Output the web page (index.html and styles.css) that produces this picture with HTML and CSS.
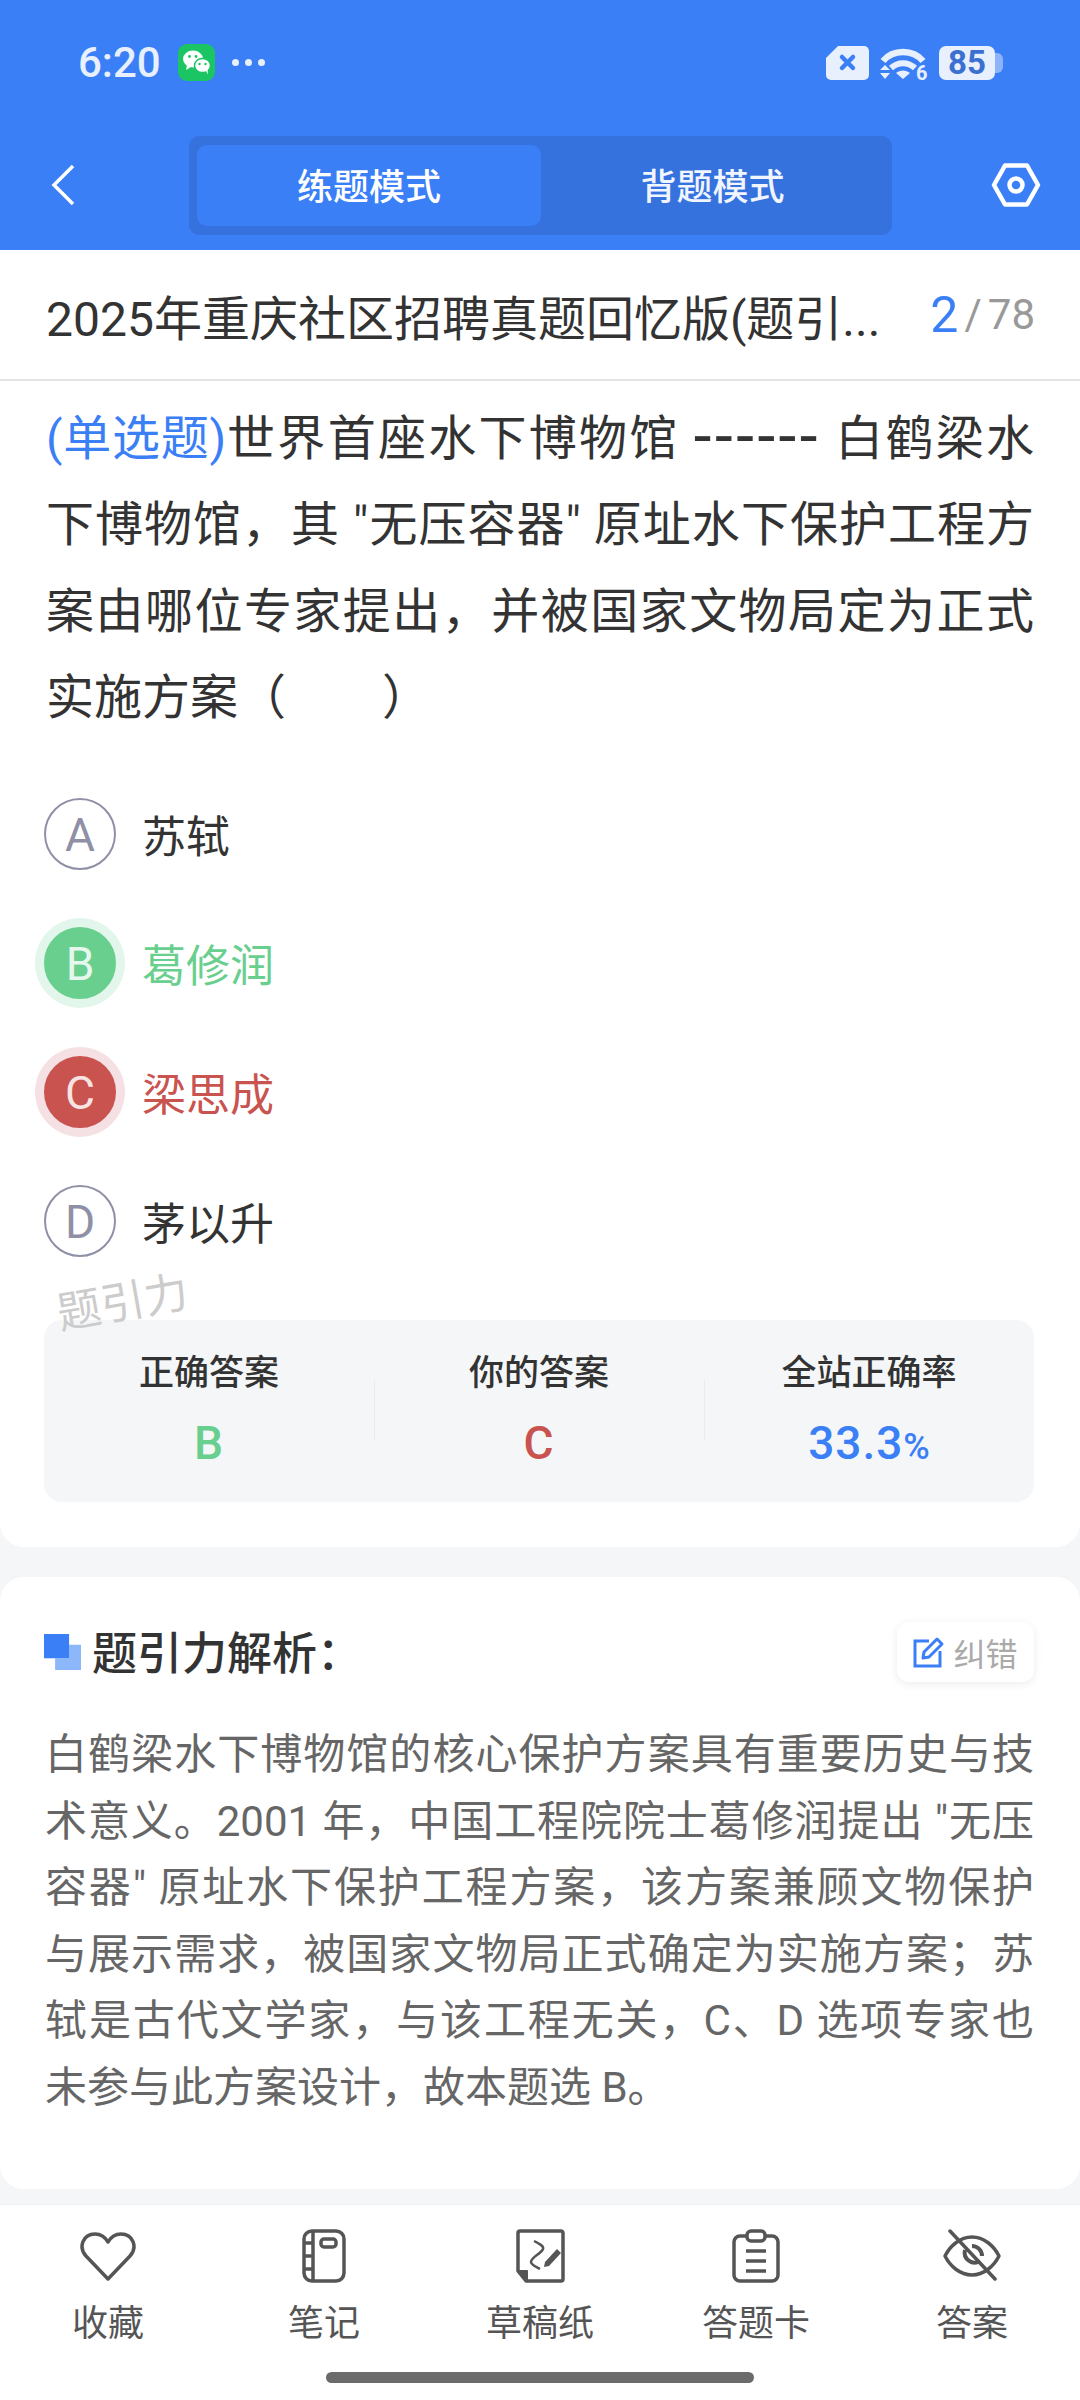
FILE: index.html
```html
<!doctype html>
<html lang="zh-CN">
<head>
	<meta charset="utf-8">
	<title>练题模式</title>
	<link rel="stylesheet" href="styles.css">
</head>
<body>
	<div id="app">
		<div class="header">
			<div class="status">
				<span class="time">6:20</span>
				<svg class="wechat" viewBox="0 0 37 37">
					<rect width="37" height="37" rx="9" fill="#1bc564"/>
					<ellipse cx="15" cy="15" rx="10" ry="8.500" fill="#fff"/>
					<path d="M9 21l-1 5 5-3z" fill="#fff"/>
					<ellipse cx="24.500" cy="21.500" rx="8" ry="7" fill="#fff" stroke="#1bc564" stroke-width="1.500"/>
					<path d="M28 27l2 3.500-.5-5z" fill="#fff"/>
					<circle cx="11.500" cy="12.500" r="1.400" fill="#1bc564"/>
					<circle cx="18" cy="12.500" r="1.400" fill="#1bc564"/>
					<circle cx="21.500" cy="20" r="1.200" fill="#1bc564"/>
					<circle cx="27.500" cy="20" r="1.200" fill="#1bc564"/>
				</svg>
				<span class="dots"><i></i><i></i><i></i></span>
				<span class="status-right">
					<svg class="sim" viewBox="0 0 43 34">
						<path d="M12 0h26a5 5 0 0 1 5 5v24a5 5 0 0 1-5 5H5a5 5 0 0 1-5-5V12z" fill="#e8effd"/>
						<path d="M16 11l11 11M27 11L16 22" stroke="#3b7ff7" stroke-width="4.500" stroke-linecap="round"/>
					</svg>
					<svg class="wifi" viewBox="0 0 46 34">
						<path d="M3 15C13 3 33 3 43 15" fill="none" stroke="#e8effd" stroke-width="6.500"/>
						<path d="M11 22c7-6.500 17-6.500 24 0" fill="none" stroke="#e8effd" stroke-width="6"/>
						<path d="M16 27c4-3.500 10-3.500 14 0l-7 6z" fill="#e8effd"/>
						<path d="M0 24l5-5 5 5zM0 27h10l-5 6z" fill="#e8effd"/>
						<text class="wifi-num" x="36" y="34">6</text>
					</svg>
					<span class="battery"><span class="battery-num">85</span></span>
				</span>
			</div>
			<div class="nav">
				<svg class="back" viewBox="0 0 24 42"><path d="M22 2L3 21l19 19" fill="none" stroke="#fff" stroke-width="3.500"/></svg>
				<div class="tabs">
					<span class="tab on">练题模式</span>
					<span class="tab">背题模式</span>
				</div>
				<svg class="setting" viewBox="0 0 50 44">
					<path d="M14 2.500h22L47 22 36 41.500H14L3 22z" fill="none" stroke="#fff" stroke-width="4.500" stroke-linejoin="round"/>
					<circle cx="25" cy="22" r="6.500" fill="none" stroke="#fff" stroke-width="4.500"/>
				</svg>
			</div>
		</div>

		<div class="card card-main">
			<div class="title-row">
				<span class="title">2025年重庆社区招聘真题回忆版(题引...</span>
				<span class="count"><b>2</b><em>/</em>78</span>
			</div>
			<div class="question"><span class="q-type">(单选题)</span>世界首座水下博物馆 <span class="dash">------</span> 白鹤梁水下博物馆，其 "无压容器" 原址水下保护工程方案由哪位专家提出，并被国家文物局定为正式实施方案（　　）</div>
			<div class="options">
				<div class="option"><span class="letter">A</span>苏轼</div>
				<div class="option right"><span class="letter">B</span>葛修润</div>
				<div class="option wrong"><span class="letter">C</span>梁思成</div>
				<div class="option"><span class="letter">D</span>茅以升</div>
			</div>
			<div class="watermark">题引力</div>
			<div class="stats">
				<div class="stat">
					<span class="stat-label">正确答案</span>
					<span class="stat-value green">B</span>
				</div>
				<div class="stat">
					<span class="stat-label">你的答案</span>
					<span class="stat-value red">C</span>
				</div>
				<div class="stat">
					<span class="stat-label">全站正确率</span>
					<span class="stat-value blue">33.3<small>%</small></span>
				</div>
			</div>
		</div>

		<div class="card card-analysis">
			<div class="analysis-head">
				<span class="mark"><i></i></span>
				<span class="analysis-title">题引力解析：</span>
				<span class="fix">
					<svg viewBox="0 0 32 32">
						<path d="M16 5H2v25h25V15" fill="none" stroke="#3b7ff7" stroke-width="3"/>
						<path d="M10 22l1-6L24 3l5 5-13 13z" fill="none" stroke="#3b7ff7" stroke-width="3" stroke-linejoin="round"/>
					</svg>
					纠错
				</span>
			</div>
			<div class="analysis-text">白鹤梁水下博物馆的核心保护方案具有重要历史与技术意义。2001 年，中国工程院院士葛修润提出 "无压容器" 原址水下保护工程方案，该方案兼顾文物保护与展示需求，被国家文物局正式确定为实施方案；苏轼是古代文学家，与该工程无关，C、D 选项专家也未参与此方案设计，故本题选 B。</div>
		</div>

		<div class="tabbar">
			<div class="tool">
				<svg class="tool-icon" viewBox="0 0 60 54">
					<path d="M30 50L8 27C0 18 5 5 17 5c6 0 10 3 13 8 3-5 7-8 13-8 12 0 17 13 9 22z" fill="none" stroke="#555" stroke-width="3.500" stroke-linejoin="round"/>
				</svg>
				<span>收藏</span>
			</div>
			<div class="tool">
				<svg class="tool-icon" viewBox="0 0 60 54">
					<rect x="10" y="2" width="40" height="50" rx="8" fill="none" stroke="#555" stroke-width="3.500"/>
					<path d="M19 2v50M10 14h9M10 27h9M10 40h9" fill="none" stroke="#555" stroke-width="3.500"/>
					<rect x="27" y="10" width="15" height="8" rx="3" fill="none" stroke="#555" stroke-width="3.500"/>
				</svg>
				<span>笔记</span>
			</div>
			<div class="tool">
				<svg class="tool-icon" viewBox="0 0 60 54">
					<path d="M16 52h35a2 2 0 0 0 2-2V4a2 2 0 0 0-2-2H10a2 2 0 0 0-2 2v38z" fill="none" stroke="#555" stroke-width="3.500" stroke-linejoin="round"/>
					<path d="M8 42h9v10z" fill="#555" stroke="#555" stroke-width="2" stroke-linejoin="round"/>
					<path d="M24 12c6 3 10 5 9 8-2 5-12 8-12 13 0 3 6 5 9 7" fill="none" stroke="#555" stroke-width="2.500"/>
					<path d="M34 38l1-5 12-13 4 4-12 13z" fill="#555"/>
				</svg>
				<span>草稿纸</span>
			</div>
			<div class="tool">
				<svg class="tool-icon" viewBox="0 0 60 54">
					<path d="M20 7h-6a6 6 0 0 0-6 6v33a6 6 0 0 0 6 6h32a6 6 0 0 0 6-6V13a6 6 0 0 0-6-6h-6" fill="none" stroke="#555" stroke-width="3.500"/>
					<rect x="21" y="2" width="18" height="10" rx="4" fill="none" stroke="#555" stroke-width="3.500"/>
					<path d="M20 22h20M20 32h20M20 42h20" stroke="#555" stroke-width="3.500"/>
				</svg>
				<span>答题卡</span>
			</div>
			<div class="tool">
				<svg class="tool-icon" viewBox="0 0 60 54">
					<path d="M3 27C8 17 18 8 30 8s22 9 27 19c-5 10-15 19-27 19S8 37 3 27z" fill="none" stroke="#555" stroke-width="3.500" stroke-linejoin="round"/>
					<path d="M38 32a10 10 0 0 1-15-11" fill="none" stroke="#555" stroke-width="4"/>
					<path d="M30 17a10 10 0 0 1 10 10" fill="none" stroke="#555" stroke-width="4"/>
					<path d="M8 2l45 48" stroke="#555" stroke-width="3.500" stroke-linecap="round"/>
				</svg>
				<span>答案</span>
			</div>
			<div class="home-bar"></div>
		</div>
	</div>
</body>
</html>
```

FILE: styles.css
```css
*{margin: 0;padding: 0;box-sizing: border-box;}
body{background: #f4f6f8; font-family: Roboto, "Noto Sans CJK SC", sans-serif; color: #333;}
#app{width: 1080px; height: 2400px; display: flex; flex-direction: column; overflow: hidden;}

/* 顶部 */
.header{height: 250px; background: #3b7ff7; flex: none;}
.status{height: 135px; padding: 0 76px 10px 78px; display: flex; align-items: center;}
.time{font-size: 42px; font-weight: 500; color: #e8effd; width: 100px;}
.wechat{width: 37px; height: 37px;}
.dots{display: flex; gap: 6px; margin-left: 17px;}
.dots i{width: 7px; height: 7px; border-radius: 50%; background: #e8effd;}
.status-right{margin-left: auto; display: flex; align-items: center;}
.sim{width: 43px; height: 34px;}
.wifi{width: 46px; height: 34px; margin-left: 11px; overflow: visible;}
.wifi-num{font-size: 20px; font-weight: 700; fill: #e8effd;}
.battery{width: 65px; height: 34px; margin-left: 13px; display: flex; align-items: center;}
.battery-num{width: 56px; height: 34px; background: #e8effd; border-radius: 7px; color: #3b6fd0; font-size: 33px; font-weight: 700; line-height: 34px; text-align: center;}
.battery::after{content: ""; width: 8px; height: 20px; background: #8db3f9; border-radius: 0 6px 6px 0;}

.nav{height: 100px; display: flex; align-items: center; padding-left: 51px;}
.back{width: 24px; height: 42px;}
.tabs{width: 703px; height: 99px; margin-left: 114px; padding: 9px 8px; background: #3672de; border-radius: 10px; display: flex;}
.tab{flex: 1; font-size: 36px; font-weight: 500; color: #f0f5ff; display: flex; align-items: center; justify-content: center; border-radius: 10px; padding-bottom: 2px;}
.tab.on{background: #3b7ff7; flex: none; width: 344px; color: #fff;}
.setting{width: 50px; height: 44px; margin-left: 99px;}

/* 题目 */
.card{background: #fff; flex: none;}
.card-main{height: 1297px; border-radius: 0 0 24px 24px; position: relative;}
.title-row{height: 131px; border-bottom: 2px solid #e4e4e4; padding: 0 45px 0 46px; display: flex; align-items: center;}
.title{font-size: 48px; white-space: nowrap;}
.count{margin-left: auto; font-size: 42px; color: #999;}
.count b{font-size: 50px; font-weight: 400; color: #3b7ff7; vertical-align: -3px;}
.count em{font-style: normal; margin: 0 6px;}
.question{margin: 15px 46px 0; font-size: 48px; line-height: 86.4px; text-align: justify;}
.q-type{color: #3b7ff7; letter-spacing: -1.5px;}
.dash{font-size: 64px; line-height: 1; letter-spacing: 3.500px; vertical-align: -3px;}

.options{margin: 56px 44px 0; display: flex; flex-direction: column; gap: 57px;}
.option{height: 72px; display: flex; align-items: center; gap: 26px; font-size: 44px;}
.letter{width: 72px; height: 72px; border: 2px solid #8f90a6; border-radius: 50%; color: #8f90a6; font-size: 46px; padding-top: 2px; display: flex; align-items: center; justify-content: center;}
.right{color: #69cf8e;}
.right .letter{background: #69cf8e; border-color: #69cf8e; color: #e6f8ed; box-shadow: 0 0 0 9px #e3f6ec;}
.wrong{color: #c9534f;}
.wrong .letter{background: #c9534f; border-color: #c9534f; color: #f8e3e3; box-shadow: 0 0 0 9px #f5e1e3;}

.watermark{position: absolute; left: 56px; top: 1017px; font-size: 44px; color: #ccc; transform: rotate(-10deg);}

.stats{margin: 63px 46px 0 44px; height: 182px; background: #f4f6f8; border-radius: 18px; display: flex;}
.stat{flex: 1; display: flex; flex-direction: column; align-items: center; padding-top: 30px; position: relative;}
.stat + .stat::before{content: ""; position: absolute; left: 0; top: 60px; height: 60px; width: 1px; background: #e9ebee;}
.stat-label{font-size: 35px; font-weight: 500; line-height: 48px;}
.stat-value{font-size: 46px; font-weight: 500; line-height: 56px; margin-top: 17px; letter-spacing: 1px;}
.stat-value small{font-size: 36px; letter-spacing: 0;}
.green{color: #69cf8e;}
.red{color: #c9534f;}
.blue{color: #3b7ff7;}

/* 解析 */
.card-analysis{height: 612px; margin-top: 30px; border-radius: 24px; padding: 45px 46px 0 44px;}
.analysis-head{height: 60px; display: flex; align-items: center;}
.mark{width: 37px; height: 36px; position: relative; background: #8cb8fb; clip-path: polygon(0 0, 68% 0, 68% 30%, 100% 30%, 100% 100%, 30% 100%, 30% 68%, 0 68%);}
.mark i{position: absolute; left: 0; top: 0; width: 25px; height: 24px; background: #3b7ff7;}
.analysis-title{margin-left: 11px; font-size: 45px; font-weight: 500; padding-bottom: 3px;}
.fix{margin-left: auto; width: 137px; height: 60px; background: #fff; border-radius: 12px; box-shadow: 0 2px 10px rgba(0,0,0,0.08); color: #aaa; font-size: 32px; display: flex; align-items: center; justify-content: center; gap: 8px;}
.fix svg{width: 32px; height: 32px;}
.analysis-text{margin: 40px 0 0 1px; font-size: 42px; line-height: 66.600px; color: #666; text-align: justify;}

/* 底部工具栏 */
.tabbar{margin-top: 15px; height: 196px; background: #fff; flex: none; border-top: 1px solid #eef0f2; display: flex; position: relative;}
.tool{width: 216px; height: 150px; padding-top: 24px; display: flex; flex-direction: column; align-items: center; font-size: 36px; color: #555;}
.tool-icon{width: 60px; height: 54px; flex: none;}
.tool span{line-height: 50px; margin-top: 16px;}
.home-bar{position: absolute; left: 326px; top: 167px; width: 428px; height: 11px; background: #6b6b6b; border-radius: 6px;}
```
